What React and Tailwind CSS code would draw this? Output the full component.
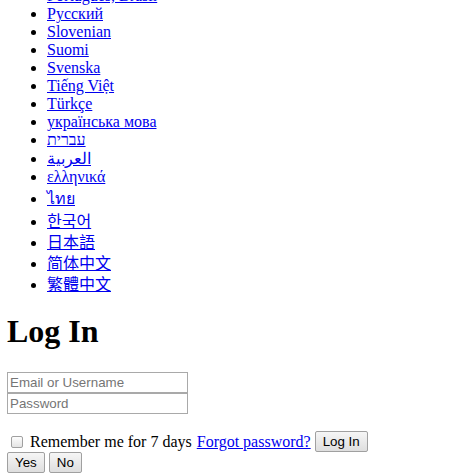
const LANGS = [
  ['Português, Brasil', false],
  ['Русский', false],
  ['Slovenian', false],
  ['Suomi', false],
  ['Svenska', false],
  ['Tiếng Việt', false],
  ['Türkçe', false],
  ['українська мова', false],
  ['עברית', false],
  ['العربية', false],
  ['ελληνικά', false],
  ['ไทย', false],
  ['한국어', true],
  ['日本語', true],
  ['简体中文', true],
  ['繁體中文', true],
];

const btn = "h-[21px] rounded-[2px] border border-[#a0a0a0] bg-gradient-to-b from-[#f6f6f6] to-[#dedede] px-[7px] font-['Liberation_Sans',sans-serif] text-[13.333px] leading-[normal] text-black";
const field = "block h-[21px] w-[181px] border border-[#a9a9a9] px-[2px] py-[1px] font-['Liberation_Sans',sans-serif] text-[13.333px] leading-[normal] text-black placeholder:text-[#757575] outline-none";

export default function App() {
  return <div className="h-[473px] overflow-hidden bg-white px-[7px] font-['Liberation_Serif','Noto_Sans_CJK_SC',serif] text-base leading-[normal] text-black">
    <ul className="mt-[-13px] mb-4 list-disc pl-10">
      {LANGS.map(([lang, cjk]) => <li key={lang} className={cjk ? 'leading-[21px]' : ''}>
        <a href="#" className="text-[#0000ee] underline">{lang}</a>
      </li>)}
    </ul>

    <h1 className="mt-[18px] mb-[22px] text-[32px] font-bold leading-[normal]">Log In</h1>

    <form onSubmit={e => e.preventDefault()}>
      <div className="flex flex-col">
        <input type="text" placeholder="Email or Username" className={field}/>
        <input type="password" placeholder="Password" className={field}/>
      </div>
      <div className="mt-[17px] flex h-[21px] items-center">
        <span className="ml-[4px] mr-[3px] inline-block h-[12px] w-[12px] rounded-[2px] border border-[#a0a0a0] bg-gradient-to-b from-[#fdfdfd] to-[#e4e4e4]"/>
        <span className="ml-[4px]">Remember me for 7 days</span>
        <a href="#" className="ml-[5px] text-[#0000ee] underline">Forgot password?</a>
        <button type="submit" className={`ml-1 ${btn}`}>Log In</button>
      </div>
      <div className="flex gap-1">
        <button type="button" className={btn}>Yes</button>
        <button type="button" className={btn}>No</button>
      </div>
    </form>
  </div>;
}
